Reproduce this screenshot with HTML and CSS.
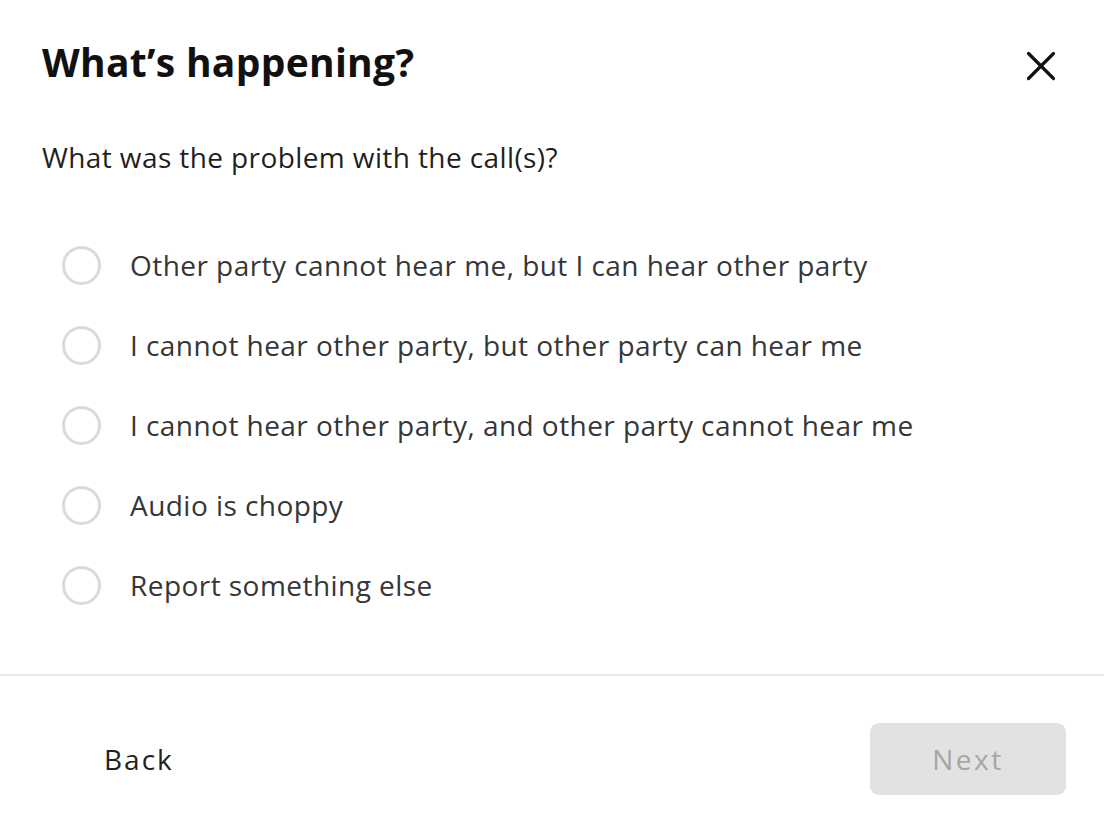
FILE: index.html
```html
<!DOCTYPE html>
<html>
<head>
<meta charset="utf-8">
<link rel="stylesheet" href="styles.css">
</head>
<body>
<div class="dialog">
  <div class="header">
    <h1 class="title">What’s happening?</h1>
    <button class="close" aria-label="Close">
      <svg width="30" height="30" viewBox="0 0 30 30"><path d="M2.5 2.5 L27.5 27.5 M27.5 2.5 L2.5 27.5" stroke="#111" stroke-width="3.2" stroke-linecap="round"/></svg>
    </button>
  </div>
  <p class="question">What was the problem with the call(s)?</p>
  <ul class="options">
    <li class="option"><span class="radio"></span><span class="label">Other party cannot hear me, but I can hear other party</span></li>
    <li class="option"><span class="radio"></span><span class="label">I cannot hear other party, but other party can hear me</span></li>
    <li class="option"><span class="radio"></span><span class="label">I cannot hear other party, and other party cannot hear me</span></li>
    <li class="option"><span class="radio"></span><span class="label">Audio is choppy</span></li>
    <li class="option"><span class="radio"></span><span class="label">Report something else</span></li>
  </ul>
  <div class="footer">
    <button class="back">Back</button>
    <button class="next" disabled>Next</button>
  </div>
</div>
</body>
</html>
```

FILE: styles.css
```css
* { box-sizing: border-box; }
html, body { margin: 0; padding: 0; background: #fff; }
body { font-family: "Open Sans", "Noto Sans", sans-serif; color: #1a1a1a; }
.dialog { width: 1104px; height: 838px; display: flex; flex-direction: column; }
.header { display: flex; justify-content: space-between; align-items: flex-start; padding: 38px 43px 0 42px; }
.title { margin: 0; font-size: 39px; font-weight: 700; line-height: 48px; color: #111; letter-spacing: 0.3px; }
.close { border: 0; background: none; padding: 0; margin-top: 8px; width: 40px; height: 40px; display: flex; align-items: center; justify-content: center; }
.question { margin: 52px 0 0 42px; font-size: 28px; line-height: 38px; color: #1f1f1f; letter-spacing: 0.4px; }
.options { list-style: none; margin: 69px 0 0 0; padding: 0 0 0 62px; display: flex; flex-direction: column; gap: 40px; }
.option { display: flex; align-items: center; height: 40px; }
.radio { width: 39px; height: 39px; border: 3px solid #d6dbe1; border-radius: 50%; flex: none; }
.label { margin-left: 29px; font-size: 28px; color: #363636; letter-spacing: 0.45px; }
.footer { margin-top: 69px; border-top: 2px solid #e8e8e8; display: flex; justify-content: space-between; align-items: center; padding: 47px 38px 0 66px; }
.back { border: 0; background: none; font-family: inherit; font-size: 28px; letter-spacing: 2px; color: #222; padding: 0 38px; height: 72px; }
.next { border: 0; background: #e2e2e2; border-radius: 9px; width: 196px; height: 72px; font-family: inherit; font-size: 28px; letter-spacing: 2.5px; color: #a6a6a6; }
```
